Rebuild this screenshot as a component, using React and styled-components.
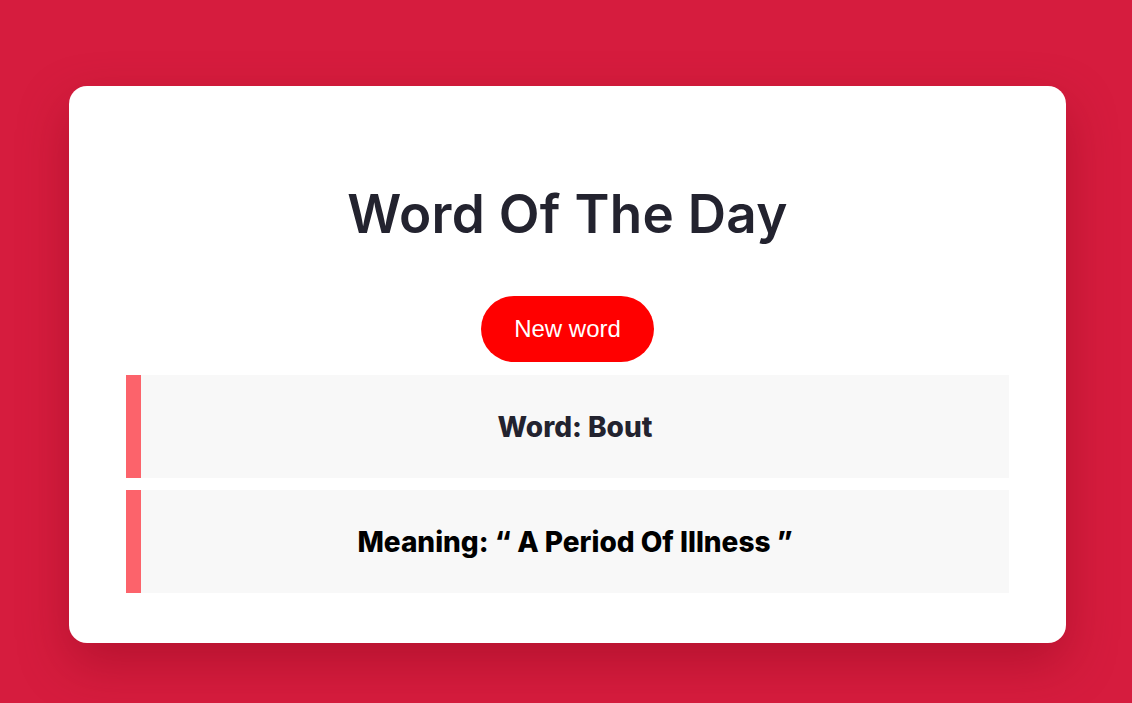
import styled, { createGlobalStyle } from "styled-components";

const GlobalStyle = createGlobalStyle`
    body {
        margin: 0;
        background: #d61c3e;
        font-family: "Liberation Sans", Arial, sans-serif;
    }
`

const Page = styled.div`
    min-height: 100vh;
    padding-top: 86px;
    box-sizing: border-box;
`

const Card = styled.div`
    width: 997px;
    margin-left: 69px;
    box-sizing: border-box;
    background: #fff;
    border-radius: 18px;
    padding: 96px 57px 50px;
    display: flex;
    flex-direction: column;
    align-items: center;
    box-shadow: 0 20px 50px rgba(120, 0, 20, 0.35);
`

const Title = styled.h1`
    margin: 0;
    font-family: "Inter", "Noto Sans", sans-serif;
    font-weight: 600;
    font-size: 53px;
    line-height: 64px;
    color: #23232f;
    letter-spacing: 0.3px;
`

const NewButton = styled.button`
    margin-top: 50px;
    width: 173px;
    height: 66px;
    border: none;
    border-radius: 33px;
    background: #ff0000;
    color: #fff;
    font-family: "Liberation Sans", Arial, sans-serif;
    font-size: 24px;
    cursor: pointer;
`

const List = styled.div`
    margin-top: 13px;
    width: 100%;
    display: flex;
    flex-direction: column;
    gap: 12px;
`

const Entry = styled.div`
    height: 103px;
    background: #f8f8f8;
    border-left: 15px solid #fc636b;
    display: flex;
    align-items: center;
    justify-content: center;
    font-family: "Inter", "Noto Sans", sans-serif;
    font-weight: 800;
    font-size: 28px;
    color: ${(p) => p.color};
`

const App = () => {
    return (
        <Page>
            <GlobalStyle />
            <Card>
                <Title>Word Of The Day</Title>
                <NewButton>New word</NewButton>
                <List>
                    <Entry color="#23232f">Word: Bout</Entry>
                    <Entry color="#000">Meaning: &ldquo; A Period Of Illness &rdquo;</Entry>
                </List>
            </Card>
        </Page>
    )
}

export default App
